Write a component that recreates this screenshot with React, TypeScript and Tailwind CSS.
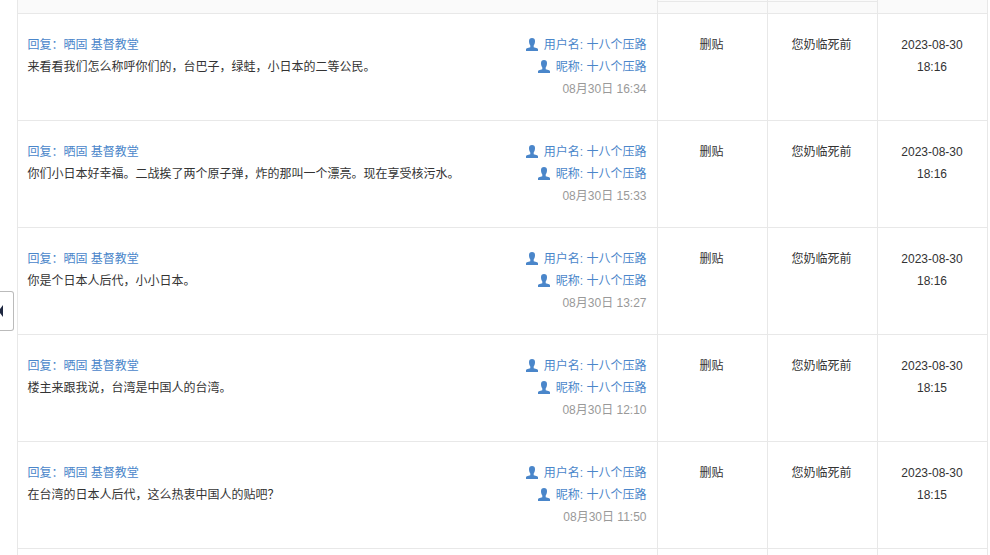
type Post = {
  text: string;
  posted: string;
  handled: string;
};

const posts: Post[] = [
  { text: "来看看我们怎么称呼你们的，台巴子，绿蛙，小日本的二等公民。", posted: "08月30日 16:34", handled: "18:16" },
  { text: "你们小日本好幸福。二战挨了两个原子弹，炸的那叫一个漂亮。现在享受核污水。", posted: "08月30日 15:33", handled: "18:16" },
  { text: "你是个日本人后代，小小日本。", posted: "08月30日 13:27", handled: "18:16" },
  { text: "楼主来跟我说，台湾是中国人的台湾。", posted: "08月30日 12:10", handled: "18:15" },
  { text: "在台湾的日本人后代，这么热衷中国人的贴吧？", posted: "08月30日 11:50", handled: "18:15" },
];

function UserIcon() {
  return (
    <svg className="mr-[6px] mb-px h-[13px] w-3 shrink-0" viewBox="0 0 12 13" fill="#4a86ca">
      <path d="M6 0C4 0 3 1.2 3 3.1c0 1.8.4 3.3 1.3 4.3v1.8L.9 10.2C.3 10.4 0 10.7 0 11.3V13h12v-1.7c0-.6-.3-.9-.9-1.1L7.7 9.2V7.4C8.6 6.4 9 4.9 9 3.1 9 1.2 8 0 6 0Z" />
    </svg>
  );
}

function PostRow({ post }: { post: Post }) {
  return (
    <div className="grid h-[107px] grid-cols-[640px_110px_110px_110px] border-b border-[#e8e8e8]">
      <div className="flex justify-between border-r border-[#e8e8e8] pr-[10.5px] pl-[9.5px] pt-5">
        <div>
          <a className="block text-[#4a86ca]">回复：晒固 基督教堂</a>
          <p>{post.text}</p>
        </div>
        <div className="flex flex-col items-end">
          <a className="flex items-center text-[#4a86ca]"><UserIcon />用户名: 十八个压路</a>
          <a className="flex items-center text-[#4a86ca]"><UserIcon />昵称: 十八个压路</a>
          <span className="text-[#999]">{post.posted}</span>
        </div>
      </div>
      <div className="border-r border-[#e8e8e8] pt-5 pr-[2px] text-center">删贴</div>
      <div className="border-r border-[#e8e8e8] pt-5 pr-[2px] text-center">您奶临死前</div>
      <div className="border-r border-[#e8e8e8] pt-5 pr-px text-center">
        <div>2023-08-30</div>
        <div>{post.handled}</div>
      </div>
    </div>
  );
}

export default function App() {
  return (
    <div className="relative h-[555px] w-[990px] overflow-hidden bg-white font-['Liberation_Sans','Noto_Sans_CJK_SC',sans-serif] text-[12px] leading-[22px] whitespace-nowrap text-[#333]">
      <div className="ml-[17px] w-[971px] border-l border-[#e8e8e8]">
        <div className="grid h-[14px] grid-cols-[640px_110px_110px_110px] border-b border-[#e8e8e8] bg-[#fafafa]">
          <div className="border-r border-[#e8e8e8]" />
          <div className="border-r border-[#e8e8e8] pt-px"><div className="h-px bg-[#e8e8e8]" /></div>
          <div className="border-r border-[#e8e8e8] pt-px"><div className="h-px bg-[#e8e8e8]" /></div>
          <div className="border-r border-[#e8e8e8]" />
        </div>
        {posts.map((post) => (
          <PostRow key={post.posted} post={post} />
        ))}
        <div className="grid h-[6px] grid-cols-[640px_110px_110px_110px]">
          <div className="border-r border-[#e8e8e8]" />
          <div className="border-r border-[#e8e8e8]" />
          <div className="border-r border-[#e8e8e8]" />
          <div className="border-r border-[#e8e8e8]" />
        </div>
      </div>
      <div className="absolute top-[291px] left-0 flex h-10 w-[14px] items-center rounded-r-[3px] border border-l-0 border-[#bbb] bg-white">
        <svg className="h-3 w-[3px]" viewBox="0 0 3 12" fill="#1e2740">
          <path d="M3 0v12L0 8V4Z" />
        </svg>
      </div>
    </div>
  );
}
